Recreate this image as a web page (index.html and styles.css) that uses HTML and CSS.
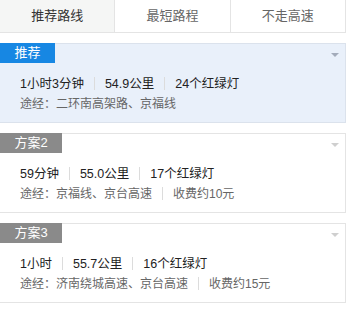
FILE: index.html
```html
<!DOCTYPE html>
<html>
  <head>
    <title>路线方案</title>
    <link rel="stylesheet" href="styles.css">
  </head>
  <body>
    <div class="tabs">
      <div class="tab tab-active">推荐路线</div>
      <div class="tab">最短路程</div>
      <div class="tab">不走高速</div>
    </div>

    <div class="plan plan-active">
      <span class="badge badge-blue">推荐</span>
      <span class="arrow"></span>
      <div class="plan-main">
        <span class="item">1小时3分钟</span>
        <span class="item">54.9公里</span>
        <span class="item">24个红绿灯</span>
      </div>
      <div class="plan-sub">
        <span class="item">途经：二环南高架路、京福线</span>
      </div>
    </div>

    <div class="plan">
      <span class="badge">方案2</span>
      <span class="arrow"></span>
      <div class="plan-main">
        <span class="item">59分钟</span>
        <span class="item">55.0公里</span>
        <span class="item">17个红绿灯</span>
      </div>
      <div class="plan-sub">
        <span class="item">途经：京福线、京台高速</span>
        <span class="item">收费约10元</span>
      </div>
    </div>

    <div class="plan">
      <span class="badge">方案3</span>
      <span class="arrow"></span>
      <div class="plan-main">
        <span class="item">1小时</span>
        <span class="item">55.7公里</span>
        <span class="item">16个红绿灯</span>
      </div>
      <div class="plan-sub">
        <span class="item">途经：济南绕城高速、京台高速</span>
        <span class="item">收费约15元</span>
      </div>
    </div>
  </body>
</html>
```

FILE: styles.css
```css
body {
  margin: 0;
  width: 346px;
  background-color: white;
  font-family: "Liberation Sans", "Noto Sans CJK SC", sans-serif;
  font-size: 12px;
  color: #333;
}

.tabs {
  display: flex;
  border-bottom: 1px solid #e4e4e4;
  border-right: 1px solid #e4e4e4;
}

.tab {
  flex: 1;
  height: 32px;
  line-height: 32px;
  text-align: center;
  font-size: 13px;
  color: #666;
  border-left: 1px solid #e4e4e4;
}

.tab:first-child {
  border-left: none;
}

.tab-active {
  background-color: #f5f6f5;
  color: #333;
}

.plan {
  position: relative;
  margin-top: 10px;
  border: 1px solid #e4e4e4;
  border-left: none;
  padding-bottom: 10px;
}

.plan-active {
  background-color: #e9f0fa;
  border-color: #dbe2ec;
}

.badge {
  display: inline-block;
  vertical-align: top;
  margin-top: -1px;
  height: 20px;
  line-height: 20px;
  padding: 0 14.5px;
  font-size: 13px;
  color: white;
  background-color: #8a8a8a;
}

.badge-blue {
  background-color: #1787e3;
}

.arrow {
  position: absolute;
  top: 9px;
  right: 6px;
  border-left: 4px solid transparent;
  border-right: 4px solid transparent;
  border-top: 4px solid #cfcfcf;
}

.plan-active .arrow {
  border-top-color: #a3abba;
}

.plan-main,
.plan-sub {
  display: flex;
  align-items: center;
  padding-left: 20px;
  height: 20px;
}

.plan-main {
  margin-top: 9px;
  font-size: 12.5px;
  color: #222;
}

.plan-sub {
  color: #666;
}

.item + .item::before {
  content: '';
  display: inline-block;
  vertical-align: -2px;
  width: 1px;
  height: 13px;
  margin: 0 10px;
  background-color: #dcdcdc;
}
```
